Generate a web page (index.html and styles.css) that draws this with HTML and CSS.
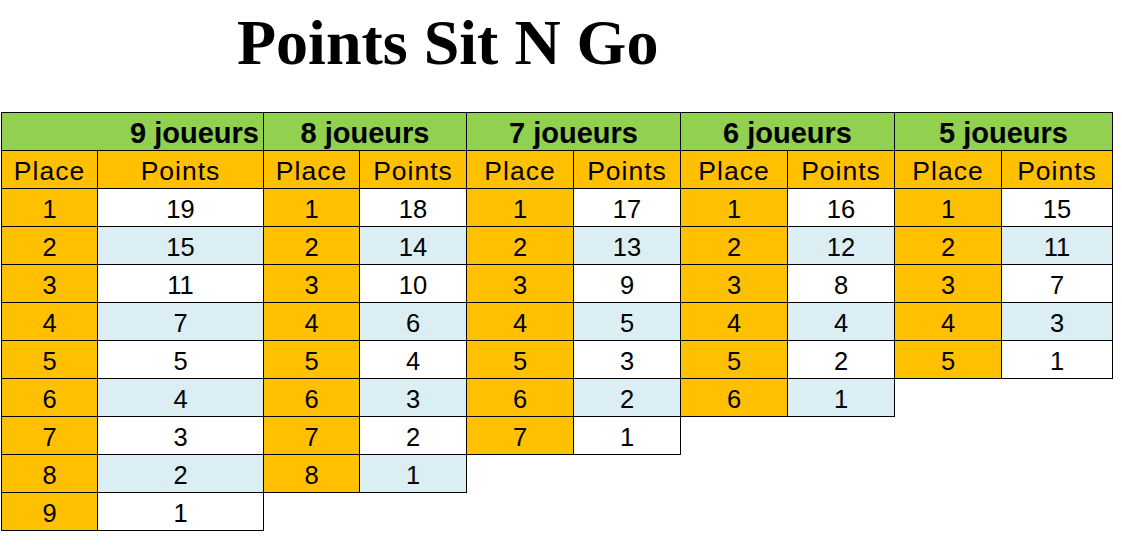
FILE: index.html
```html
<!DOCTYPE html>
<html lang="fr">
<head>
<meta charset="utf-8">
<title>Points Sit N Go</title>
<link rel="stylesheet" href="styles.css">
</head>
<body>
<h1 class="title">Points Sit N Go</h1>
<table class="grid">
  <colgroup>
    <col style="width:96px">
    <col style="width:166px">
    <col style="width:96px">
    <col style="width:107px">
    <col style="width:107px">
    <col style="width:107px">
    <col style="width:107px">
    <col style="width:107px">
    <col style="width:107px">
    <col style="width:111px">
  </colgroup>
  <tr class="group">
    <th colspan="2" class="right">9 joueurs</th>
    <th colspan="2">8 joueurs</th>
    <th colspan="2">7 joueurs</th>
    <th colspan="2">6 joueurs</th>
    <th colspan="2">5 joueurs</th>
  </tr>
  <tr class="sub">
    <td>Place</td><td>Points</td>
    <td>Place</td><td>Points</td>
    <td>Place</td><td>Points</td>
    <td>Place</td><td>Points</td>
    <td>Place</td><td>Points</td>
  </tr>
  <tr class="odd">
    <td class="pl">1</td><td>19</td>
    <td class="pl">1</td><td>18</td>
    <td class="pl">1</td><td>17</td>
    <td class="pl">1</td><td>16</td>
    <td class="pl">1</td><td>15</td>
  </tr>
  <tr class="even">
    <td class="pl">2</td><td>15</td>
    <td class="pl">2</td><td>14</td>
    <td class="pl">2</td><td>13</td>
    <td class="pl">2</td><td>12</td>
    <td class="pl">2</td><td>11</td>
  </tr>
  <tr class="odd">
    <td class="pl">3</td><td>11</td>
    <td class="pl">3</td><td>10</td>
    <td class="pl">3</td><td>9</td>
    <td class="pl">3</td><td>8</td>
    <td class="pl">3</td><td>7</td>
  </tr>
  <tr class="even">
    <td class="pl">4</td><td>7</td>
    <td class="pl">4</td><td>6</td>
    <td class="pl">4</td><td>5</td>
    <td class="pl">4</td><td>4</td>
    <td class="pl">4</td><td>3</td>
  </tr>
  <tr class="odd">
    <td class="pl">5</td><td>5</td>
    <td class="pl">5</td><td>4</td>
    <td class="pl">5</td><td>3</td>
    <td class="pl">5</td><td>2</td>
    <td class="pl">5</td><td>1</td>
  </tr>
  <tr class="even">
    <td class="pl">6</td><td>4</td>
    <td class="pl">6</td><td>3</td>
    <td class="pl">6</td><td>2</td>
    <td class="pl">6</td><td>1</td>
    <td class="empty"></td><td class="empty"></td>
  </tr>
  <tr class="odd">
    <td class="pl">7</td><td>3</td>
    <td class="pl">7</td><td>2</td>
    <td class="pl">7</td><td>1</td>
    <td class="empty"></td><td class="empty"></td>
    <td class="empty"></td><td class="empty"></td>
  </tr>
  <tr class="even">
    <td class="pl">8</td><td>2</td>
    <td class="pl">8</td><td>1</td>
    <td class="empty"></td><td class="empty"></td>
    <td class="empty"></td><td class="empty"></td>
    <td class="empty"></td><td class="empty"></td>
  </tr>
  <tr class="odd">
    <td class="pl">9</td><td>1</td>
    <td class="empty"></td><td class="empty"></td>
    <td class="empty"></td><td class="empty"></td>
    <td class="empty"></td><td class="empty"></td>
    <td class="empty"></td><td class="empty"></td>
  </tr>
</table>
</body>
</html>
```

FILE: styles.css
```css
html, body {
  margin: 0;
  padding: 0;
  background: #ffffff;
}

.title {
  margin: 0;
  padding: 11px 0 0 237px;
  height: 101px;
  font-family: "Liberation Serif", "Times New Roman", serif;
  font-weight: bold;
  font-size: 64px;
  line-height: 64px;
  color: #000;
}

.grid {
  margin-left: 1px;
  border-collapse: collapse;
  table-layout: fixed;
  font-family: "Liberation Sans", Arial, sans-serif;
  color: #000;
}

.grid th,
.grid td {
  height: 35px;
  padding: 2px 0 0 0;
  border: 1px solid #000;
  text-align: center;
  vertical-align: middle;
  font-size: 25.5px;
  line-height: 30px;
}

.grid .group th {
  background: #92d050;
  font-weight: bold;
  font-size: 29px;
}

.grid .group th.right {
  text-align: right;
  padding-right: 4px;
}

.grid .sub td {
  background: #ffc000;
  font-size: 26.5px;
  letter-spacing: 1px;
}

.grid .odd td {
  background: #ffffff;
}

.grid .even td {
  background: #daeef3;
}

.grid tr td.pl {
  background: #ffc000;
}

.grid tr td.empty {
  background: #ffffff;
  border: none;
}
```
